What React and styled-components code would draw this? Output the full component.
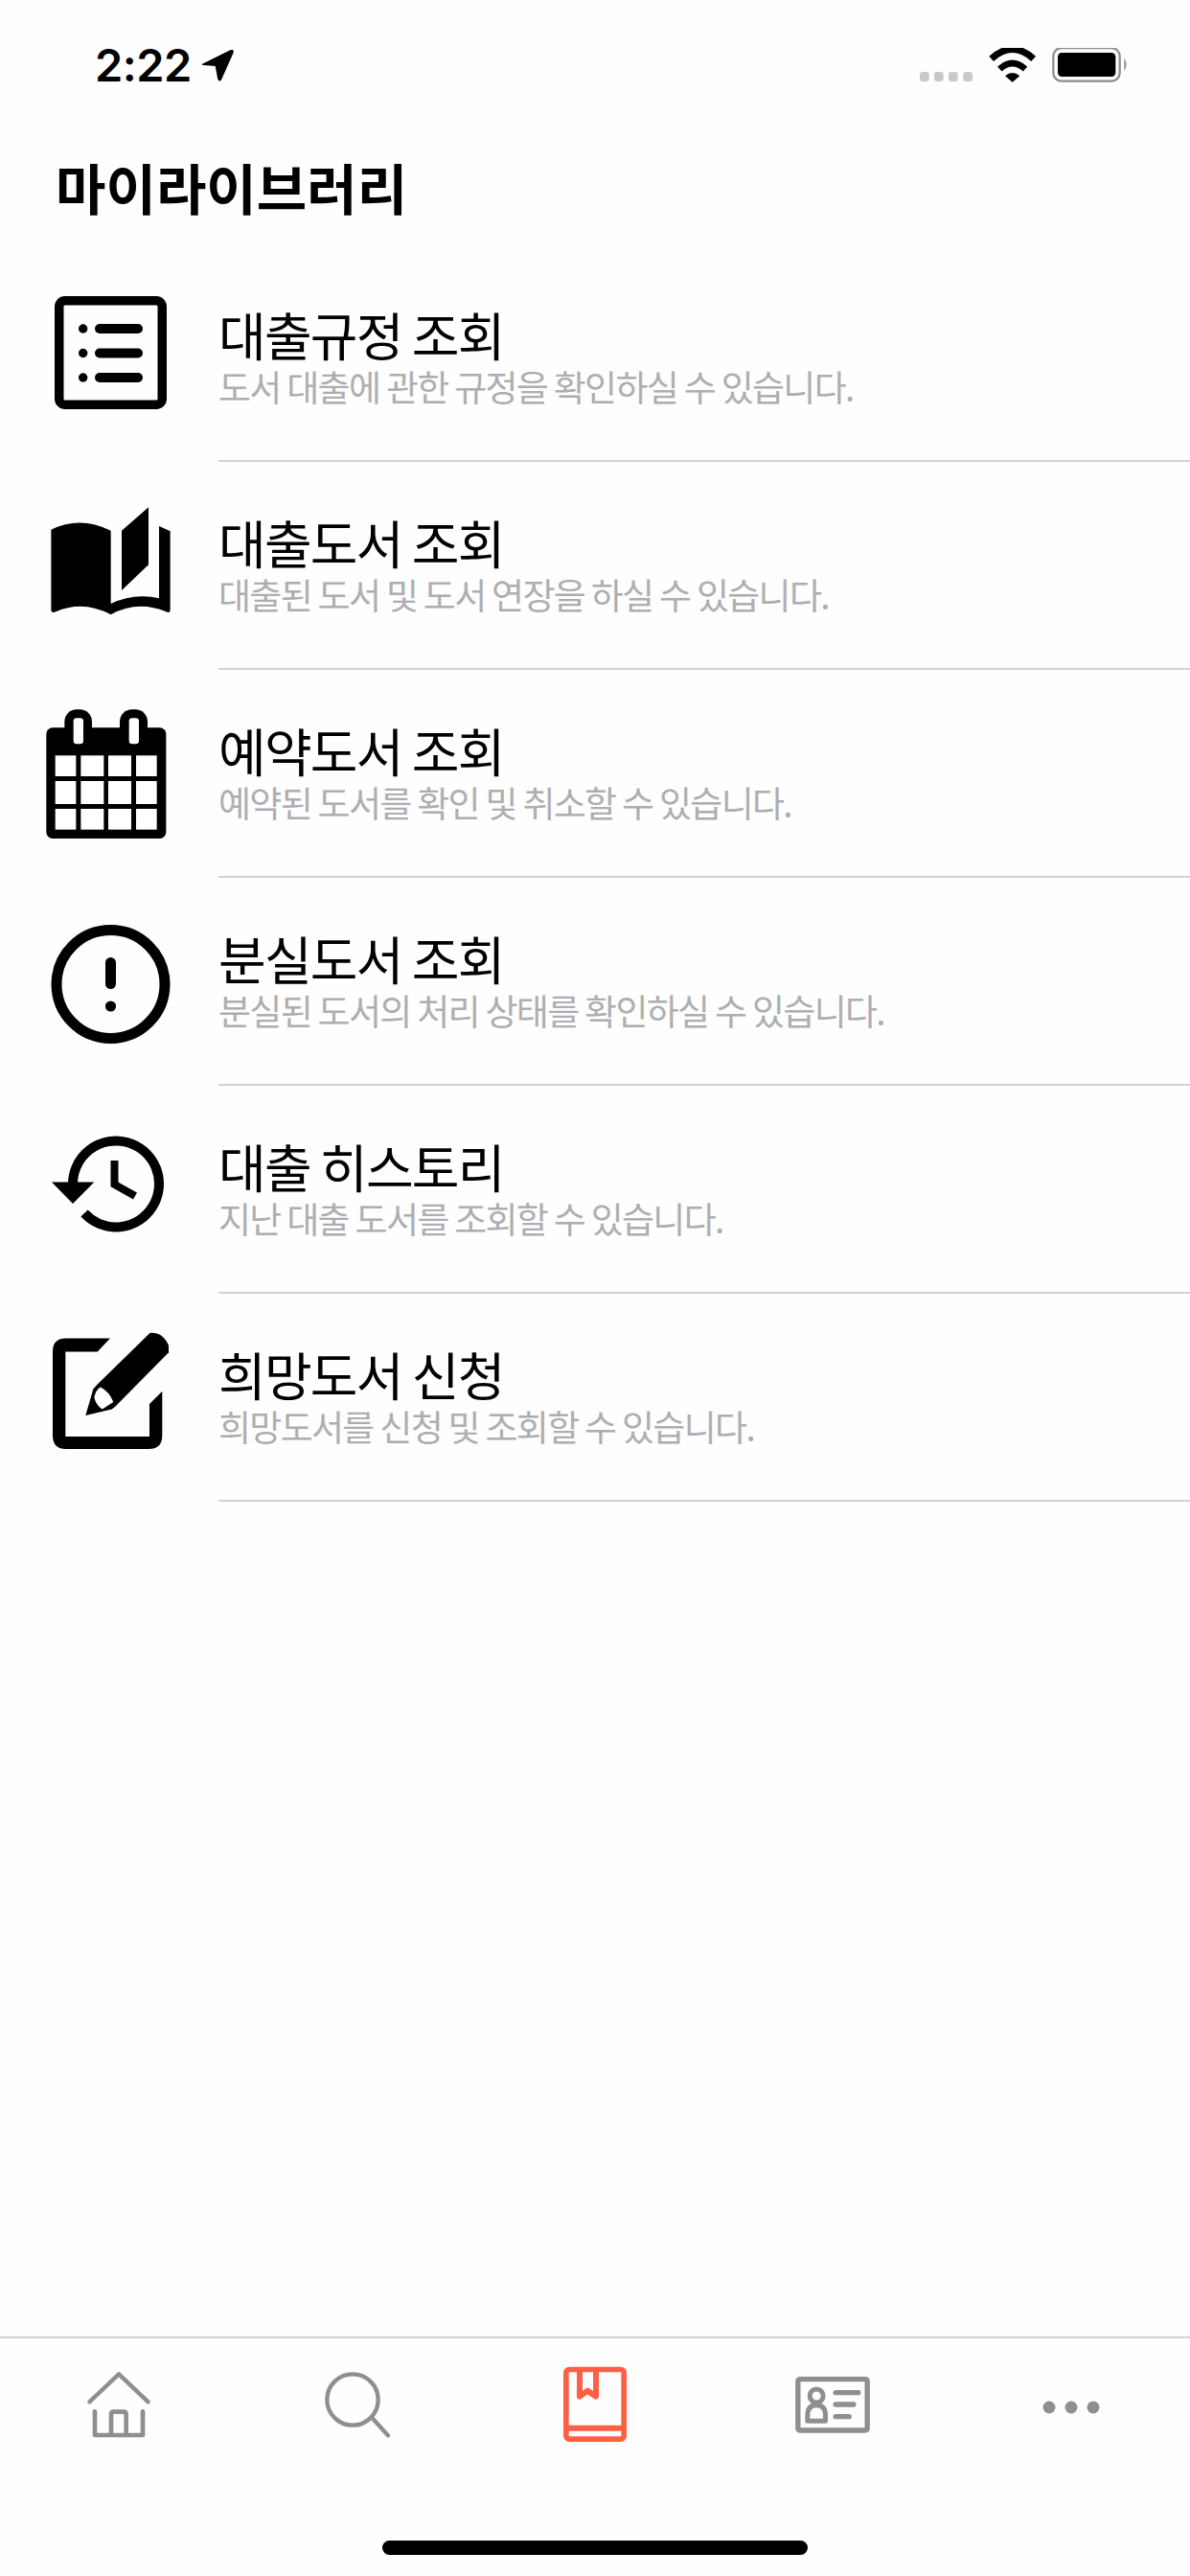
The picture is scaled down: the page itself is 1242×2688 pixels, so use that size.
import React from "react";
import styled, { createGlobalStyle } from "styled-components";

const Global = createGlobalStyle`
  html, body { margin: 0; padding: 0; background: #fefefe; }
  #root { width: 1242px; }
`;

const KR = `"Noto Sans CJK KR", "Noto Sans", sans-serif`;

const Screen = styled.div`
  width: 1242px;
  height: 2688px;
  display: flex;
  flex-direction: column;
  background: #fefefe;
  color: #000;
  font-family: ${KR};
  overflow: hidden;
`;
const StatusBar = styled.div`
  height: 136px;
  flex: none;
  display: flex;
  align-items: center;
  justify-content: space-between;
  padding: 0 62px 0 99px;
`;
const TimeGroup = styled.div`
  display: flex;
  align-items: center;
  gap: 10px;
`;
const Time = styled.span`
  font-family: Inter, "Liberation Sans", sans-serif;
  font-size: 47px;
  font-weight: 600;
  line-height: 56px;
  letter-spacing: -0.5px;
`;
const Header = styled.header`
  height: 129px;
  flex: none;
  display: flex;
  align-items: center;
  padding: 0 0 14px 58px;
  box-sizing: border-box;
`;
const PageTitle = styled.h1`
  margin: 0;
  font-size: 57px;
  line-height: 70px;
  font-weight: 700;
  letter-spacing: 0;
`;
const List = styled.ul`
  list-style: none;
  margin: 0;
  padding: 0;
  flex: 1;
`;
const Row = styled.li`
  height: 217px;
  display: flex;
  align-items: center;
  padding-left: 40px;
  gap: 38px;
`;
const RowIcon = styled.svg`
  width: 150px;
  height: 150px;
  flex: none;
  display: block;
`;
const RowBody = styled.div`
  flex: 1;
  align-self: stretch;
  box-sizing: border-box;
  display: flex;
  flex-direction: column;
  justify-content: center;
  padding-top: 4px;
  border-bottom: 2px solid #d2d2d4;
`;
const RowTitle = styled.div`
  font-size: 54px;
  line-height: 56px;
  letter-spacing: -1.8px;
  color: #000;
`;
const RowSub = styled.div`
  font-size: 37px;
  line-height: 52px;
  letter-spacing: -1.7px;
  color: #aeaeb2;
`;
const TabBar = styled.nav`
  flex: none;
  height: 250px;
  box-sizing: border-box;
  border-top: 2px solid #d2d2d4;
  position: relative;
`;
const Tabs = styled.div`
  display: grid;
  grid-template-columns: repeat(5, 1fr);
  padding-top: 24px;
`;
const Tab = styled.div`
  display: flex;
  justify-content: center;
`;
const TabIcon = styled.svg`
  width: 90px;
  height: 90px;
  display: block;
  color: ${(p) => (p.$active ? "#ff5f45" : "#8e8e93")};
`;
const HomeIndicator = styled.div`
  position: absolute;
  left: 399px;
  bottom: 22px;
  width: 444px;
  height: 15px;
  border-radius: 8px;
  background: #000;
`;

const ListIcon = () => (
  <RowIcon viewBox="0 1 150 150">
    <rect x="21.75" y="15.75" width="107.5" height="108.5" rx="6" fill="none" stroke="#000" strokeWidth="9.5" />
    {[45, 70.5, 96].map((y) => (
      <g key={y}>
        <circle cx="46.7" cy={y} r="4.7" />
        <line x1="64" x2="104" y1={y} y2={y} stroke="#000" strokeWidth="10" strokeLinecap="round" />
      </g>
    ))}
  </RowIcon>
);

const BookIcon = () => (
  <RowIcon viewBox="120 105 450 450">
    <path d="M160 215 Q250 170 347 218 L347 447 Q420 412 498 430 L498 204 L533 220 L533 465 Q533 478 520 472 Q430 435 347 481 Q260 435 175 472 Q160 478 160 465 Z" />
    <path d="M381 218 L465 145 L465 325 L381 405 Z" />
  </RowIcon>
);

const CalendarIcon = () => {
  const xs = [[173, 238], [253, 325], [339, 411], [426, 491]];
  const ys = [[922, 987], [1002, 1074], [1089, 1154]];
  return (
    <RowIcon viewBox="120 756 450 450">
      <rect x="145" y="835" width="375" height="347" rx="20" />
      <rect x="202" y="778" width="86" height="130" rx="38" />
      <rect x="375" y="778" width="87" height="130" rx="38" />
      <rect x="230" y="805" width="31" height="81" rx="10" fill="#fff" />
      <rect x="404" y="805" width="31" height="81" rx="10" fill="#fff" />
      {ys.map(([y1, y2]) =>
        xs.map(([x1, x2]) => (
          <rect key={`${x1}-${y1}`} x={x1} y={y1} width={x2 - x1} height={y2 - y1} fill="#fff" />
        ))
      )}
    </RowIcon>
  );
};

const AlertIcon = () => (
  <RowIcon viewBox="0 3 150 150">
    <circle cx="75.5" cy="80" r="56.5" fill="none" stroke="#000" strokeWidth="11" />
    <rect x="70" y="52" width="11" height="33" rx="5.5" />
    <circle cx="75.5" cy="103" r="5.6" />
  </RowIcon>
);

const HistoryIcon = () => (
  <RowIcon viewBox="0 7 150 150">
    <path d="M36 76 A45 45 0 1 1 48 106" fill="none" stroke="#000" strokeWidth="10" />
    <path d="M14 73.5 L58.3 73.5 L36 96 Z" />
    <polyline points="79.5,51 79.5,76 101,88" fill="none" stroke="#000" strokeWidth="8" />
  </RowIcon>
);

const EditIcon = () => (
  <RowIcon viewBox="0 8 150 150">
    <path d="M75 20.4 L61.7 34.4 L28.3 34.4 L28.3 123 L116 123 L116 89 L129.3 75.8 L129.3 122 Q129.3 136 115 136 L29 136 Q15 136 15 122 L15 34 Q15 20.4 29 20.4 Z" />
    <path d="M49.3 101 L57.3 73.6 L61.7 68.4 L116.7 14.8 Q130 14 136 27.9 L136 35.3 L80 92 L76.7 94.6 Z" />
    <path d="M58.3 82 Q60 74 65 71.5 Q74 76 78.3 87 L66.7 94.6 Q60 90 58.3 82 Z" fill="#fff" />
  </RowIcon>
);

const items = [
  { Icon: ListIcon, title: "대출규정 조회", sub: "도서 대출에 관한 규정을 확인하실 수 있습니다." },
  { Icon: BookIcon, title: "대출도서 조회", sub: "대출된 도서 및 도서 연장을 하실 수 있습니다." },
  { Icon: CalendarIcon, title: "예약도서 조회", sub: "예약된 도서를 확인 및 취소할 수 있습니다." },
  { Icon: AlertIcon, title: "분실도서 조회", sub: "분실된 도서의 처리 상태를 확인하실 수 있습니다." },
  { Icon: HistoryIcon, title: "대출 히스토리", sub: "지난 대출 도서를 조회할 수 있습니다." },
  { Icon: EditIcon, title: "희망도서 신청", sub: "희망도서를 신청 및 조회할 수 있습니다." },
];

const LocationArrow = () => (
  <svg width="34" height="33" viewBox="393 67 95 93">
    <path d="M397 108 L478 68 Q490 63 487 76 L452 155 Q445 163 441 152 L434 115 L400 112 Q390 111 397 108 Z" />
  </svg>
);

const StatusIcons = () => (
  <svg width="220" height="37" viewBox="180 60 660 111">
    {[180, 225, 270, 316].map((x) => (
      <rect key={x} x={x} y="135" width="29" height="30" rx="9" fill="#c8c8ca" />
    ))}
    <path d="M404 94 Q470 34 536 94" fill="none" stroke="#000" strokeWidth="21" />
    <path d="M430 126 Q470 90 510 126" fill="none" stroke="#000" strokeWidth="20" />
    <path d="M447 148 Q470 128 493 148 L470 167 Z" />
    <rect x="598" y="60" width="208" height="104" rx="26" fill="none" stroke="#8e8e93" strokeWidth="7" />
    <rect x="612" y="75" width="181" height="75" rx="13" />
    <path d="M820 92 Q834 112 820 132 Z" fill="#8e8e93" />
  </svg>
);

const HomeTab = () => (
  <TabIcon viewBox="57 70 270 270" fill="none" stroke="currentColor" strokeLinecap="round" strokeLinejoin="round">
    <polyline points="100,197 192,110 284,197" strokeWidth="13" />
    <path d="M117 227 L117 301 L267 301 L267 227" strokeWidth="14" />
    <path d="M168 298 L168 236 Q168 228 176 228 L207 228 Q215 228 215 236 L215 298" strokeWidth="14" />
  </TabIcon>
);
const SearchTab = () => (
  <TabIcon viewBox="801 70 270 270" fill="none" stroke="currentColor" strokeLinecap="round">
    <circle cx="921" cy="190" r="80" strokeWidth="13" />
    <line x1="982" y1="247" x2="1032" y2="302" strokeWidth="13" />
  </TabIcon>
);
const BookTab = () => (
  <TabIcon $active viewBox="49 70 270 270" fill="none" stroke="currentColor" strokeLinejoin="round">
    <rect x="93.5" y="95.5" width="181" height="218" rx="10" strokeWidth="17" />
    <line x1="94" x2="274" y1="279" y2="279" strokeWidth="18" />
    <path d="M136 100 L136 180 L161 162 L187 180 L187 100" strokeWidth="18" />
  </TabIcon>
);
const CardTab = () => (
  <TabIcon viewBox="791.5 70 270 270" fill="none" stroke="currentColor" strokeLinecap="round" strokeLinejoin="round">
    <rect x="818" y="126" width="217" height="160" rx="6" strokeWidth="16" />
    <circle cx="876" cy="178" r="21" strokeWidth="15" />
    <path d="M848 257 L848 238 Q848 207 876 207 Q904 207 904 238 L904 257 Z" strokeWidth="15" />
    <line x1="936" x2="1007" y1="168" y2="168" strokeWidth="16" />
    <line x1="936" x2="992" y1="205" y2="205" strokeWidth="16" />
    <line x1="936" x2="978" y1="243" y2="243" strokeWidth="16" />
  </TabIcon>
);
const MoreTab = () => (
  <TabIcon viewBox="0 0 90 90" fill="currentColor">
    <circle cx="22" cy="48" r="6.5" />
    <circle cx="45" cy="48" r="6.5" />
    <circle cx="68" cy="48" r="6.5" />
  </TabIcon>
);

export default function App() {
  return (
    <Screen>
      <Global />
      <StatusBar>
        <TimeGroup>
          <Time>2:22</Time>
          <LocationArrow />
        </TimeGroup>
        <StatusIcons />
      </StatusBar>
      <Header>
        <PageTitle>마이라이브러리</PageTitle>
      </Header>
      <List>
        {items.map(({ Icon, title, sub }) => (
          <Row key={title}>
            <Icon />
            <RowBody>
              <RowTitle>{title}</RowTitle>
              <RowSub>{sub}</RowSub>
            </RowBody>
          </Row>
        ))}
      </List>
      <TabBar>
        <Tabs>
          <Tab><HomeTab /></Tab>
          <Tab><SearchTab /></Tab>
          <Tab><BookTab /></Tab>
          <Tab><CardTab /></Tab>
          <Tab><MoreTab /></Tab>
        </Tabs>
        <HomeIndicator />
      </TabBar>
    </Screen>
  );
}
